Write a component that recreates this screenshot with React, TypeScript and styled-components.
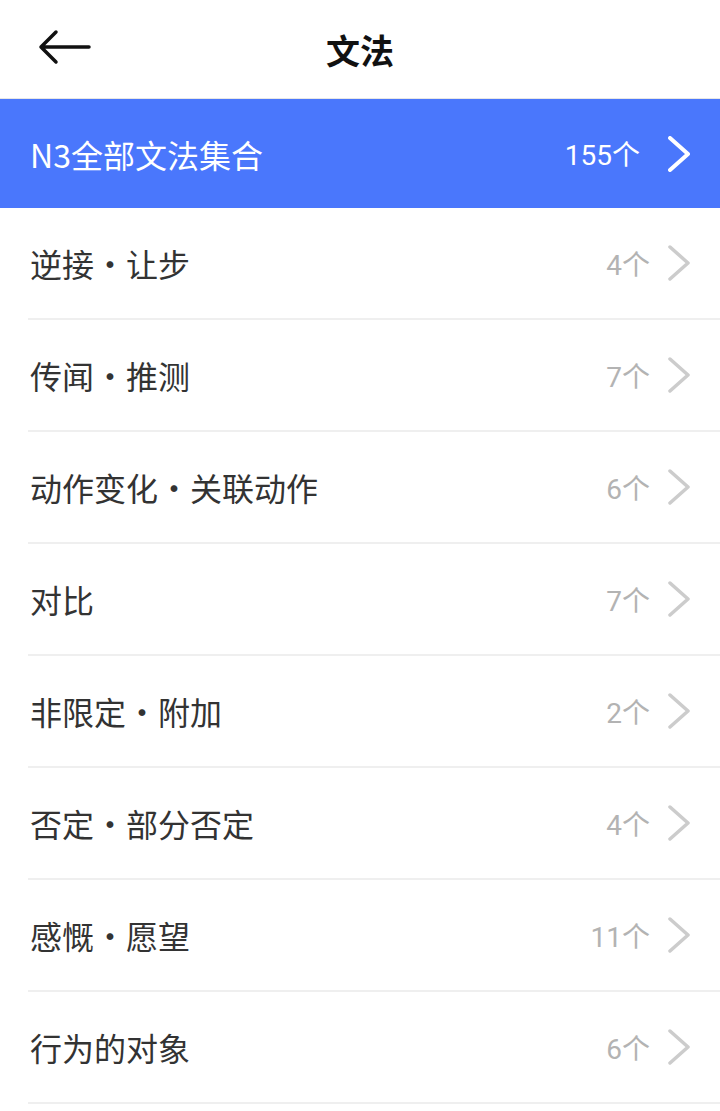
import React from "react";
import styled, { createGlobalStyle } from "styled-components";

const GlobalStyle = createGlobalStyle`
  body {
    margin: 0;
    background: #ffffff;
    font-family: "Noto Sans CJK SC", "Noto Sans", sans-serif;
  }
`;

const Page = styled.div`
  width: 720px;
  min-height: 1111px;
  background: #ffffff;
  display: flex;
  flex-direction: column;
`;

const Header = styled.header`
  height: 98px;
  border-bottom: 1px solid #e6e6e6;
  display: flex;
  align-items: center;
  justify-content: center;
  position: relative;
`;

const BackButton = styled.button`
  position: absolute;
  left: 38px;
  top: 28px;
  width: 56px;
  height: 38px;
  padding: 0;
  border: none;
  background: none;
  display: flex;
  align-items: center;
`;

const Title = styled.h1`
  margin: 0;
  font-size: 34px;
  font-weight: 700;
  color: #111111;
`;

const List = styled.ul`
  list-style: none;
  margin: 0;
  padding: 0;
`;

const Row = styled.li<{ $primary?: boolean }>`
  height: ${(p) => (p.$primary ? "109px" : "110px")};
  display: flex;
  align-items: center;
  padding: 0 30px 0 30px;
  background: ${(p) => (p.$primary ? "#4a77fc" : "#ffffff")};
  ${(p) =>
    !p.$primary &&
    `border-bottom: 2px solid #efefef; margin-left: 28px; padding-left: 2px;`}
`;

const Label = styled.span<{ $primary?: boolean }>`
  flex: 1;
  font-size: 32px;
  color: ${(p) => (p.$primary ? "#ffffff" : "#333333")};
  line-height: 1;
`;

const Count = styled.span<{ $primary?: boolean }>`
  font-size: 28px;
  color: ${(p) => (p.$primary ? "#ffffff" : "#b3b3b3")};
  font-family: "Roboto", "Noto Sans CJK SC", sans-serif;
  margin-right: ${(p) => (p.$primary ? "28px" : "18px")};
  padding-top: ${(p) => (p.$primary ? "4px" : "6px")};
  line-height: 1;
`;

const Chevron = ({ color, width }: { color: string; width: number }) => (
  <svg width="22" height="36" viewBox="0 0 22 36">
    <polyline
      points="2,2 20,18 2,34"
      fill="none"
      stroke={color}
      strokeWidth={width}
      strokeLinecap="round"
      strokeLinejoin="round"
    />
  </svg>
);

const items: [string, number][] = [
  ["逆接・让步", 4],
  ["传闻・推测", 7],
  ["动作变化・关联动作", 6],
  ["对比", 7],
  ["非限定・附加", 2],
  ["否定・部分否定", 4],
  ["感慨・愿望", 11],
  ["行为的对象", 6],
];

const App = () => {
  return (
    <Page>
      <GlobalStyle />
      <Header>
        <BackButton aria-label="back">
          <svg width="54" height="36" viewBox="0 0 54 36">
            <path
              d="M3 18 H51 M18 3 L3 18 L18 33"
              fill="none"
              stroke="#111"
              strokeWidth="3.5"
              strokeLinecap="round"
              strokeLinejoin="round"
            />
          </svg>
        </BackButton>
        <Title>文法</Title>
      </Header>
      <List>
        <Row $primary>
          <Label $primary>N3全部文法集合</Label>
          <Count $primary>155个</Count>
          <Chevron color="#ffffff" width={4} />
        </Row>
        {items.map(([name, n]) => (
          <Row key={name}>
            <Label>{name}</Label>
            <Count>{n}个</Count>
            <Chevron color="#cccccc" width={3.5} />
          </Row>
        ))}
      </List>
    </Page>
  );
};

export default App;
